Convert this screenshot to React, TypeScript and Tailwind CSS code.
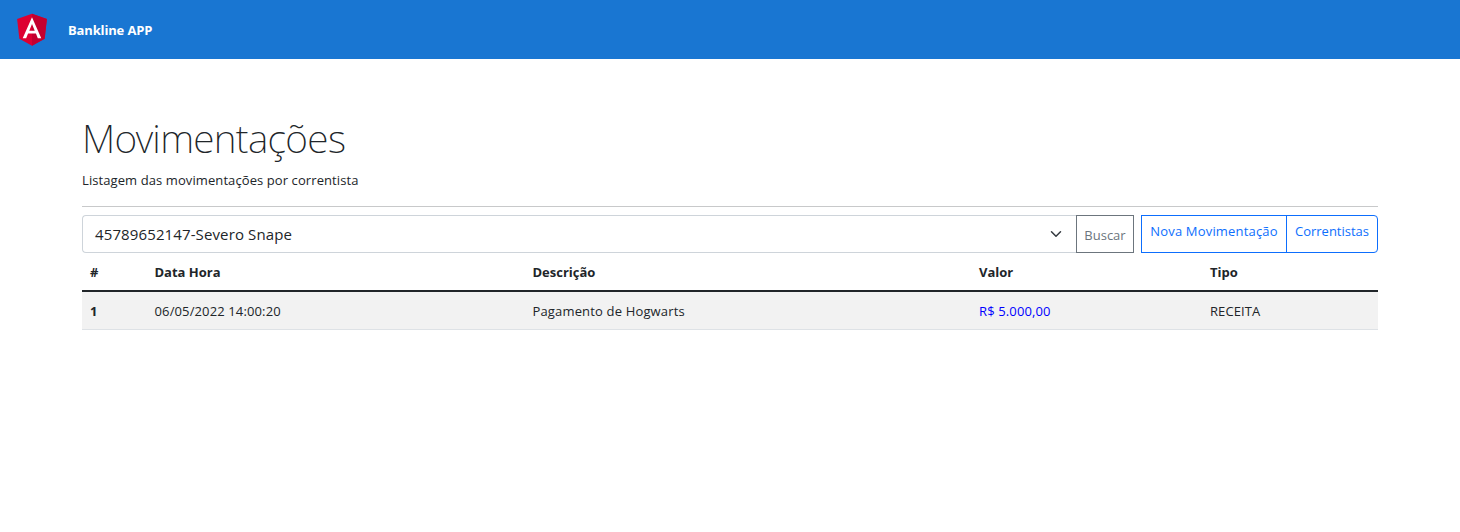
const columns = ['#', 'Data Hora', 'Descrição', 'Valor', 'Tipo'];

const grid = 'grid grid-cols-[64.5px_378px_446.5px_231px_1fr]';

function AngularLogo() {
  return (
    <svg viewBox="0 0 250 250" className="mb-px size-10" aria-hidden="true">
      <polygon fill="#DD0031" points="125,30 31.9,63.2 46.1,186.3 125,230 203.9,186.3 218.1,63.2" />
      <polygon fill="#C3002F" points="125,30 125,52.2 125,153.4 125,230 203.9,186.3 218.1,63.2" />
      <path
        fill="#FFFFFF"
        d="M125,52.1L66.8,182.6h21.7l11.7-29.2h49.4l11.7,29.2H183L125,52.1z M142,135.4H108l17-40.9L142,135.4z"
      />
    </svg>
  );
}

export default function App() {
  return (
    <div className="min-h-screen bg-white font-['Open_Sans','Noto_Sans',sans-serif] text-[13px] leading-[21px] tracking-[0.09px] text-[#212529]">
      <header className="flex h-[59px] items-center bg-[#1976d2] pl-3 text-white">
        <AngularLogo />
        <span className="ml-4 pt-0.5 font-bold tracking-[-0.15px]">Bankline APP</span>
      </header>

      <main className="mx-auto w-[1296px] pt-14">
        <h1 className="pb-0.5 font-['Noto_Sans','Open_Sans',sans-serif] text-[39px] font-extralight leading-[46px] tracking-[-0.7px]">Movimentações</h1>
        <p className="mt-[7px]">Listagem das movimentações por correntista</p>
        <hr className="mt-[15px] border-[#c8c9ca]" />

        <div className="mt-2 flex h-[38px]">
          <button className="flex flex-1 items-center justify-between rounded-l border border-r-0 border-[#ced4da] pl-3 pr-3.5 text-[15px] tracking-[0.12px]">
            <span>45789652147-Severo Snape</span>
            <svg viewBox="0 0 16 16" className="size-3" fill="none" stroke="#343a40" strokeWidth="2" strokeLinecap="round" strokeLinejoin="round">
              <path d="M2 5l6 6 6-6" />
            </svg>
          </button>
          <button className="w-[58px] border border-[#6c757d] pt-0.5 text-center tracking-normal text-[#6c757d]">Buscar</button>
          <div className="ml-[7px] flex text-[#0d6efd]">
            <a className="w-[146px] whitespace-nowrap border border-[#0d6efd] pt-[5px] text-center tracking-[0.18px]">Nova Movimentação</a>
            <a className="-ml-px w-[92px] whitespace-nowrap rounded-r border border-[#0d6efd] pt-[5px] text-center tracking-normal">Correntistas</a>
          </div>
        </div>

        <div role="table">
          <div role="row" className={`${grid} h-[39px] border-b-2 border-[#212529] pl-2 pt-[9px] font-bold tracking-normal`}>
            {columns.map((label) => (
              <span role="columnheader" key={label}>{label}</span>
            ))}
          </div>
          <div role="row" className={`${grid} h-[38px] border-b border-[#dee2e6] bg-[#f2f2f2] pl-2 pt-[9px]`}>
            <span className="font-bold">1</span>
            <span className="tracking-[0.13px]">06/05/2022 14:00:20</span>
            <span className="tracking-[0.16px]">Pagamento de Hogwarts</span>
            <span className="tracking-[0.13px] text-[#0000ff]">R$ 5.000,00</span>
            <span>RECEITA</span>
          </div>
        </div>
      </main>
    </div>
  );
}
